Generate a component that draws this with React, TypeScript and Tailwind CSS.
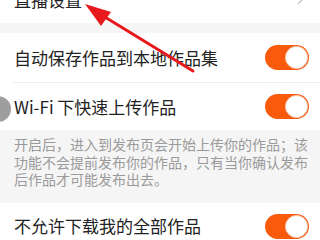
import React from "react";

function Toggle() {
  return (
    <div className="w-[44px] h-[25px] rounded-full bg-[#fa5a0c] flex items-center justify-end pr-[1px] shrink-0">
      <div className="w-[23px] h-[23px] rounded-full bg-white border border-[#f3d2c0]" />
    </div>
  );
}

function Row({ label, h }: { label: string; h: string }) {
  return (
    <div className={`bg-white flex items-center justify-between pl-[14px] pr-[11px] ${h}`}>
      <span className="text-[17px] leading-[20px] text-[#222]">{label}</span>
      <Toggle />
    </div>
  );
}

export default function App() {
  return (
    <div
      className="relative w-[320px] h-[240px] overflow-hidden bg-[#f5f5f5]"
      style={{ fontFamily: '"Noto Sans CJK SC", "Noto Sans", sans-serif' }}
    >
      {/* top row, cut off */}
      <div className="bg-white h-[23px] flex items-start justify-between pl-[14px] pr-[14px] overflow-hidden">
        <span className="text-[17px] leading-[20px] text-[#222] -mt-[10px]">直播设置</span>
        <svg width="10" height="14" viewBox="0 0 10 14" className="-mt-[9px]">
          <path d="M2 1 L8 7 L2 13" fill="none" stroke="#c4c4c4" strokeWidth="1.4" />
        </svg>
      </div>

      <div className="h-[10px]" />

      <Row label="自动保存作品到本地作品集" h="h-[49px]" />
      <div className="bg-white h-[1px] pl-[13px]">
        <div className="h-full bg-[#ececec]" />
      </div>
      <Row label="Wi-Fi 下快速上传作品" h="h-[47px]" />

      <div className="pl-[14px] pr-[10px] pt-[6px] pb-[14px] h-[73px]">
        <p className="text-[14px] leading-[17.5px] text-[#9a9a9a]">
          开启后，进入到发布页会开始上传你的作品；该功能不会提前发布你的作品，只有当你确认发布后作品才可能发布出去。
        </p>
      </div>

      <Row label="不允许下载我的全部作品" h="h-[46px]" />

      {/* gray touch indicator */}
      <div className="absolute left-[-15px] top-[96px] w-[26px] h-[26px] rounded-full bg-[#9e9e9e]" />

      {/* red annotation arrow */}
      <svg className="absolute left-0 top-0" width="320" height="240" viewBox="0 0 320 240">
        <line x1="193" y1="71" x2="100" y2="14" stroke="#e8191c" strokeWidth="3" strokeLinecap="round" />
        <polygon points="85,4 111,12 101,26" fill="#e8191c" />
      </svg>
    </div>
  );
}
